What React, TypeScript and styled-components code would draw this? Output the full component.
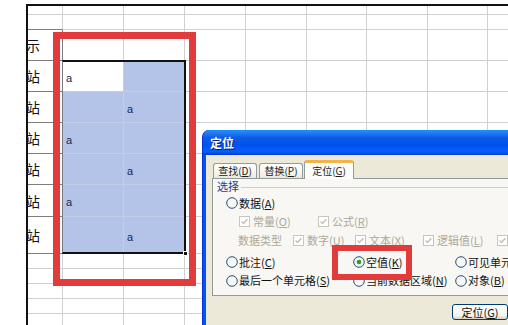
import styled, { createGlobalStyle, css } from "styled-components";

const GlobalStyle = createGlobalStyle`
  html, body {
    margin: 0;
    padding: 0;
    background: #ffffff;
  }
  body {
    font-family: "Noto Sans CJK SC", "Noto Sans", sans-serif;
  }
  * {
    box-sizing: border-box;
  }
`;

const COLS = [35, 61, 61, 61, 61, 60, 61, 60, 61];
const ROWS = [9, 15, 31, 31, 31, 31, 31, 32, 37, 15, 15, 15, 15, 15];

const Page = styled.div`
  position: relative;
  width: 508px;
  height: 325px;
  overflow: hidden;
  background: #fff;
  padding: 4px 0 0 26px;
`;

const Sheet = styled.div`
  display: grid;
  grid-template-columns: ${COLS.map((c) => c + "px").join(" ")};
  grid-template-rows: ${ROWS.map((r) => r + "px").join(" ")};
  width: max-content;
  border-top: 2px solid #111;
  border-left: 2px solid #111;
`;

type Tone = "plain" | "edge" | "label" | "sel" | "active";

const Cell = styled.div<{ $tone: Tone }>`
  display: flex;
  align-items: center;
  overflow: hidden;
  white-space: nowrap;
  padding: 3px 0 0 3px;
  border-right: 1px solid #d0d0d0;
  border-bottom: 1px solid #d0d0d0;
  background: #fff;
  color: #1d2548;
  font: 11px "Liberation Sans", Arial, sans-serif;

  ${({ $tone }) =>
    $tone === "edge" &&
    css`
      border-bottom-color: #7d7d7d;
    `}
  ${({ $tone }) =>
    $tone === "label" &&
    css`
      justify-content: flex-end;
      padding: 0 22px 0 0;
      border-color: #7d7d7d;
      color: #141414;
      font: 14px "Noto Sans CJK SC", sans-serif;
    `}
  ${({ $tone }) =>
    $tone === "sel" &&
    css`
      background: #b4c4e8;
      border-color: #c2cde8;
    `}
  ${({ $tone }) =>
    $tone === "active" &&
    css`
      border-color: #c2cde8;
    `}
`;

const Selection = styled.div`
  position: absolute;
  left: 62px;
  top: 60px;
  width: 124px;
  height: 194px;
  border: 2px solid #111;
  border-left: 1px solid #777;
  pointer-events: none;
`;

const FillHandle = styled.div`
  position: absolute;
  right: -4px;
  bottom: -4px;
  width: 5px;
  height: 5px;
  background: #111;
  border: 1px solid #fff;
`;

const Highlight = styled.div<{ $w: number }>`
  position: absolute;
  border: ${({ $w }) => $w}px solid #e23b3b;
  pointer-events: none;
`;

const Dialog = styled.div`
  position: absolute;
  left: 202px;
  top: 130px;
  width: 320px;
  height: 200px;
  background: #0055ea;
  border-left: 1px solid #0831d9;
  border-radius: 7px 7px 0 0;
  overflow: hidden;
`;

const TitleBar = styled.div`
  height: 25px;
  display: flex;
  align-items: center;
  padding-left: 7px;
  background: linear-gradient(
    to bottom,
    #0997ff 0%,
    #2a7cf4 10%,
    #0c5ce8 30%,
    #0050ee 60%,
    #0061f8 88%,
    #003dd7 96%,
    #003dd7 100%
  );
  color: #fff;
  font: bold 12px "Noto Sans CJK SC", sans-serif;
  text-shadow: 1px 1px #0a1b69;
`;

const Body = styled.div`
  margin-left: 3px;
  height: 175px;
  background: #ece9d8;
  padding: 5px 0 0 6px;
`;

const TabStrip = styled.div`
  display: flex;
  align-items: flex-end;
  height: 18px;
  padding-left: 1px;
`;

const Tab = styled.div<{ $w: number; $active?: boolean }>`
  width: ${({ $w }) => $w}px;
  height: 15px;
  margin-right: 2px;
  display: flex;
  align-items: center;
  justify-content: center;
  white-space: nowrap;
  border: 1px solid #919b9c;
  border-bottom: none;
  border-radius: 3px 3px 0 0;
  background: linear-gradient(#ffffff, #f3f2ec 70%, #e7e6df);
  color: #1b1b1b;
  font: 10px/1 "Noto Sans CJK SC", sans-serif;

  ${({ $active }) =>
    $active &&
    css`
      height: 19px;
      margin: 0 0 -1px -1px;
      position: relative;
      border-top: 3px solid #f4b34a;
      background: #fcfcfa;
      padding-bottom: 1px;
    `}
`;

const Panel = styled.div`
  height: 118px;
  margin-right: 6px;
  border: 1px solid #919b9c;
  background: #f8f7f3;
`;

const GroupHead = styled.div`
  display: flex;
  align-items: center;
  height: 15px;
  padding-left: 4px;
  color: #22408a;
  font: 11px/1 "Noto Sans CJK SC", sans-serif;

  &::after {
    content: "";
    flex: 1;
    margin-left: 2px;
    margin-top: 1px;
    border-top: 1px solid #d0d0bf;
  }
`;

const Line = styled.div<{ $h: number; $pl: number; $cols: string }>`
  display: grid;
  grid-template-columns: ${({ $cols }) => $cols};
  align-items: center;
  height: ${({ $h }) => $h}px;
  padding-left: ${({ $pl }) => $pl}px;
  white-space: nowrap;
`;

const Opt = styled.span<{ $off?: boolean; $gap: number }>`
  display: flex;
  align-items: center;
  gap: ${({ $gap }) => $gap}px;
  color: ${({ $off }) => ($off ? "#aca899" : "#111")};
  font: 11px/1 "Noto Sans CJK SC", sans-serif;
`;

const Muted = styled.span`
  color: #aca899;
  font: 11px/1 "Noto Sans CJK SC", sans-serif;
`;

const Key = styled.span`
  text-decoration: underline;
`;

const ButtonRow = styled.div`
  display: flex;
  padding: 8px 0 0 240px;
`;

const Button = styled.div`
  width: 56px;
  height: 16px;
  display: flex;
  align-items: center;
  justify-content: center;
  border: 1px solid #003c74;
  border-radius: 3px;
  background: linear-gradient(#ffffff, #f4f3ee 75%, #d8d2c6);
  color: #111;
  font: 11px/1 "Noto Sans CJK SC", sans-serif;
`;

const Radio = ({ on }: { on?: boolean }) => (
  <svg width="12" height="12" viewBox="0 0 12 12">
    <circle cx="6" cy="6" r="5.3" fill="#f7f7f4" stroke="#29507c" strokeWidth="1" />
    {on && <circle cx="6" cy="6" r="2.3" fill="#2f9a2f" />}
  </svg>
);

const Box = () => (
  <svg width="11" height="11" viewBox="0 0 11 11">
    <rect x="0.5" y="0.5" width="10" height="10" fill="#fff" stroke="#c9c7ba" />
    <path d="M2.6 5.4 L4.5 7.4 L8.4 3.3" stroke="#c4c1b3" strokeWidth="1.5" fill="none" />
  </svg>
);

const mn = (label: string, key: string) => (
  <span>
    {label}(<Key>{key}</Key>)
  </span>
);

function cellFor(r: number, c: number) {
  if (c === 0) {
    if (r === 1) return { tone: "edge" as Tone, text: "" };
    if (r >= 2 && r <= 8) return { tone: "label" as Tone, text: r === 2 ? "示" : "站" };
    return { tone: "plain" as Tone, text: "" };
  }
  if ((c === 1 || c === 2) && r >= 3 && r <= 8) {
    const k = r - 3;
    const tone: Tone = r === 3 && c === 1 ? "active" : "sel";
    const hasA = (k % 2 === 0 && c === 1) || (k % 2 === 1 && c === 2);
    return { tone, text: hasA ? "a" : "" };
  }
  return { tone: "plain" as Tone, text: "" };
}

export default function App() {
  const cells = [];
  for (let r = 0; r < ROWS.length; r++) {
    for (let c = 0; c < COLS.length; c++) {
      const { tone, text } = cellFor(r, c);
      cells.push(
        <Cell key={`${r}-${c}`} $tone={tone}>
          {text}
        </Cell>
      );
    }
  }

  return (
    <>
      <GlobalStyle />
      <Page>
        <Sheet>{cells}</Sheet>

        <Selection>
          <FillHandle />
        </Selection>
        <Highlight $w={7} style={{ left: 53, top: 32, width: 143, height: 254 }} />

        <Dialog>
          <TitleBar>定位</TitleBar>
          <Body>
            <TabStrip>
              <Tab $w={44}>{mn("查找", "D")}</Tab>
              <Tab $w={44}>{mn("替换", "P")}</Tab>
              <Tab $w={50} $active>
                {mn("定位", "G")}
              </Tab>
            </TabStrip>
            <Panel>
              <GroupHead>选择</GroupHead>
              <Line $h={18} $pl={13} $cols="auto">
                <Opt $gap={1}>
                  <Radio />
                  {mn("数据", "A")}
                </Opt>
              </Line>
              <Line $h={18} $pl={26} $cols="79px auto">
                <Opt $gap={3} $off>
                  <Box />
                  {mn("常量", "O")}
                </Opt>
                <Opt $gap={3} $off>
                  <Box />
                  {mn("公式", "R")}
                </Opt>
              </Line>
              <Line $h={21} $pl={25} $cols="55px 62px 68px 74px auto">
                <Muted>数据类型</Muted>
                <Opt $gap={3} $off>
                  <Box />
                  {mn("数字", "U")}
                </Opt>
                <Opt $gap={3} $off>
                  <Box />
                  {mn("文本", "X")}
                </Opt>
                <Opt $gap={3} $off>
                  <Box />
                  {mn("逻辑值", "L")}
                </Opt>
                <Opt $gap={3} $off>
                  <Box />
                  {mn("错误", "E")}
                </Opt>
              </Line>
              <Line $h={22} $pl={13} $cols="127px 102px auto">
                <Opt $gap={1}>
                  <Radio />
                  {mn("批注", "C")}
                </Opt>
                <Opt $gap={1}>
                  <Radio on />
                  {mn("空值", "K")}
                </Opt>
                <Opt $gap={1}>
                  <Radio />
                  {mn("可见单元格", "Y")}
                </Opt>
              </Line>
              <Line $h={15} $pl={13} $cols="127px 102px auto">
                <Opt $gap={1}>
                  <Radio />
                  {mn("最后一个单元格", "S")}
                </Opt>
                <Opt $gap={1}>
                  <Radio />
                  {mn("当前数据区域", "N")}
                </Opt>
                <Opt $gap={1}>
                  <Radio />
                  {mn("对象", "B")}
                </Opt>
              </Line>
            </Panel>
            <ButtonRow>
              <Button>{mn("定位", "G")}</Button>
            </ButtonRow>
          </Body>
        </Dialog>

        <Highlight $w={6} style={{ left: 332, top: 245, width: 80, height: 35 }} />
      </Page>
    </>
  );
}
